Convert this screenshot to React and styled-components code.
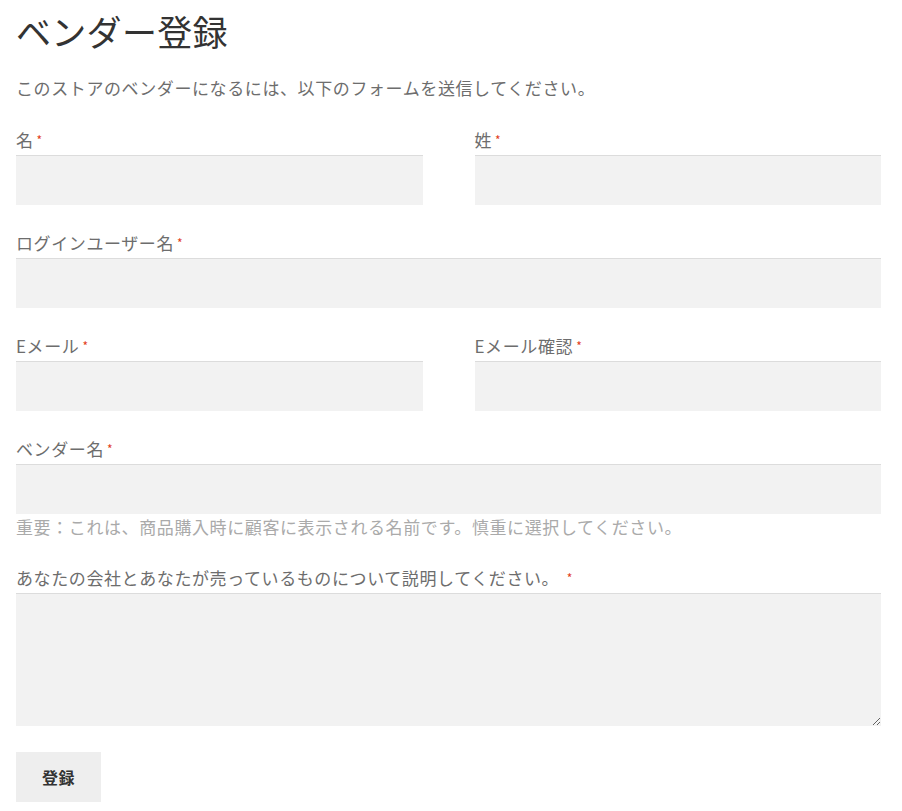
import React from 'react';
import styled, {createGlobalStyle} from 'styled-components';

const GlobalStyle = createGlobalStyle`
  body {
    margin: 0;
    background: #fff;
    font-family: "Noto Sans CJK JP", "Noto Sans", sans-serif;
    color: #6d6d6d;
  }
`

const Page = styled.div`
  padding: 9px 21px 10px 16px;
`

const Title = styled.h1`
  font-size: 35px;
  font-weight: 400;
  color: #333;
  margin: 0 0 22px;
  line-height: 44px;
  letter-spacing: 0.3px;
`

const Intro = styled.p`
  font-size: 17px;
  letter-spacing: 0.6px;
  margin: 0 0 26px;
  line-height: 26px;
  color: #6d6d6d;
`

const Form = styled.form`
  display: flex;
  flex-direction: column;
`

const Row = styled.div`
  display: grid;
  grid-template-columns: ${p => p.$cols === 2 ? '1fr 1fr' : '1fr'};
  column-gap: 52px;
  margin-bottom: ${p => p.$last ? '26px' : '25px'};
`

const Field = styled.div`
  display: flex;
  flex-direction: column;
`

const Label = styled.label`
  font-size: 17px;
  letter-spacing: 0.6px;
  line-height: 26px;
  margin-bottom: 2px;
  color: #6d6d6d;
`

const Req = styled.span`
  color: #e2401c;
  font-size: 12px;
  margin-left: 3px;
  vertical-align: top;
`

const Input = styled.input`
  box-sizing: border-box;
  height: 50px;
  width: 100%;
  background: #f2f2f2;
  border: none;
  border-top: 1px solid #dcdcdc;
  outline: none;
  font: inherit;
  padding: 0 12px;
`

const TextArea = styled.textarea`
  box-sizing: border-box;
  height: 133px;
  width: 100%;
  background: #f2f2f2;
  border: none;
  border-top: 1px solid #dcdcdc;
  outline: none;
  font: inherit;
  padding: 8px 12px;
  display: block;
`

const Help = styled.span`
  font-size: 17px;
  letter-spacing: 0.6px;
  line-height: 26px;
  color: #aaa;
`

const Button = styled.button`
  align-self: flex-start;
  width: 85px;
  height: 50px;
  border: none;
  background: #eee;
  color: #333;
  font: inherit;
  font-size: 16px;
  font-weight: 700;
  letter-spacing: 0.5px;
  cursor: pointer;
`

function TextField({label, help}) {
    return (
        <Field>
            <Label>{label}<Req>*</Req></Label>
            <Input type="text"/>
            {help && <Help>{help}</Help>}
        </Field>
    )
}

export default function App() {
    return (
        <>
            <GlobalStyle/>
            <Page>
                <Title>ベンダー登録</Title>
                <Intro>このストアのベンダーになるには、以下のフォームを送信してください。</Intro>
                <Form onSubmit={e => e.preventDefault()}>
                    <Row $cols={2}>
                        <TextField label="名"/>
                        <TextField label="姓"/>
                    </Row>
                    <Row>
                        <TextField label="ログインユーザー名"/>
                    </Row>
                    <Row $cols={2}>
                        <TextField label="Eメール"/>
                        <TextField label="Eメール確認"/>
                    </Row>
                    <Row>
                        <TextField label="ベンダー名"
                                   help="重要：これは、商品購入時に顧客に表示される名前です。慎重に選択してください。"/>
                    </Row>
                    <Row $last>
                        <Field>
                            <Label>あなたの会社とあなたが売っているものについて説明してください。 <Req>*</Req></Label>
                            <TextArea/>
                        </Field>
                    </Row>
                    <Button type="submit">登録</Button>
                </Form>
            </Page>
        </>
    );
}
